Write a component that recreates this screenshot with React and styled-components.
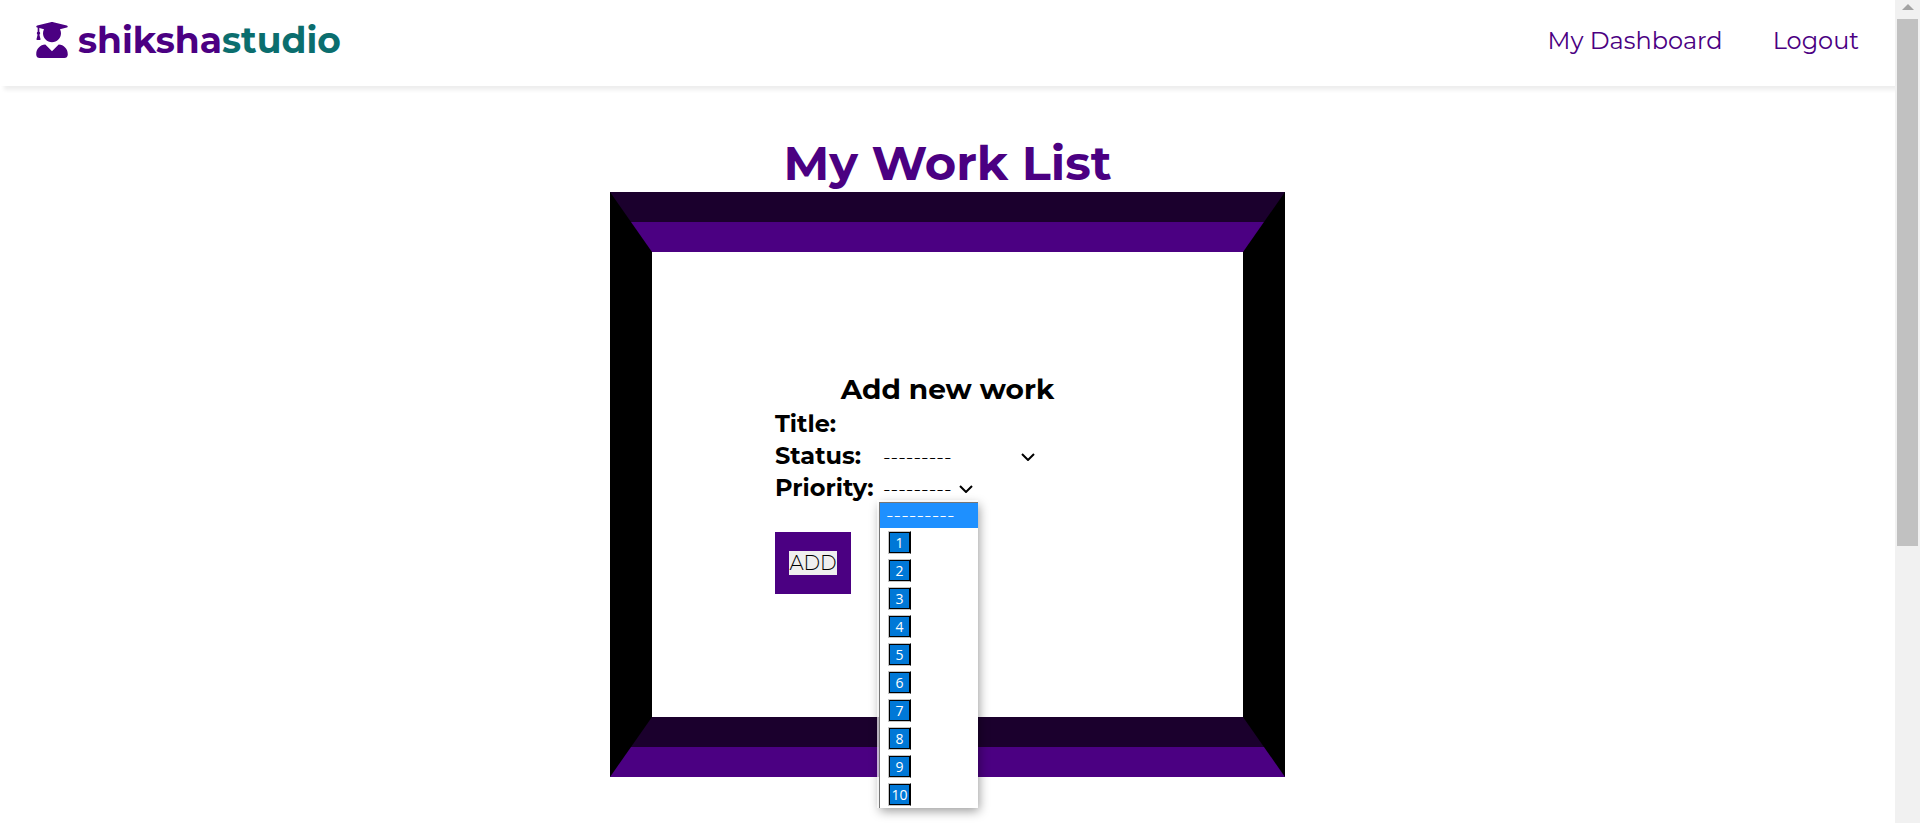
import React from "react";
import styled, { createGlobalStyle } from "styled-components";
import { FaUserGraduate } from "react-icons/fa";

const INDIGO = "#4b0082";
const INDIGO_DARK = "#1b002d";
const TEAL = "#0b6e6e";

const GlobalStyle = createGlobalStyle`
  *, *::before, *::after { box-sizing: border-box; }
  body {
    margin: 0;
    background: #fff;
    color: #000;
    font-family: Montserrat, Inter, sans-serif;
  }
  h1, h2, p, ul { margin: 0; padding: 0; }
`;

const Window = styled.div`
  display: grid;
  grid-template-columns: minmax(0, 1fr) 25px;
  height: 100vh;
  overflow: hidden;
`;

const Page = styled.div`
  min-width: 0;
`;

const ScrollTrack = styled.div`
  display: flex;
  flex-direction: column;
  align-items: center;
  background: #f1f1f1;
`;

const ScrollArrow = styled.svg`
  flex: none;
  width: 12px;
  height: 6px;
  margin: 4px 0 9px;
  fill: #a3a3a3;
`;

const ScrollThumb = styled.div`
  width: 21px;
  height: 64vh;
  background: #c1c1c1;
`;

const Header = styled.header`
  display: flex;
  justify-content: space-between;
  align-items: flex-start;
  height: 86px;
  padding: 17px 36px;
  box-shadow: 4px 4px 4px #eee;
`;

const Logo = styled.a`
  display: flex;
  align-items: center;
  gap: 10px;
  color: ${INDIGO};
  font-size: 36px;
  font-weight: 700;
  line-height: 46px;
  text-decoration: none;

  svg {
    width: 32px;
    height: 36px;
  }
`;

const LogoAccent = styled.span`
  color: ${TEAL};
`;

const Nav = styled.nav`
  display: flex;
  gap: 50px;
`;

const NavLink = styled.a`
  color: ${INDIGO};
  font-size: 24px;
  line-height: 48px;
  text-decoration: none;
`;

const Main = styled.main`
  display: flex;
  flex-direction: column;
  align-items: center;
  padding-top: 48px;
`;

const PageTitle = styled.h1`
  color: ${INDIGO};
  font-size: 48px;
  font-weight: 700;
  line-height: 58px;
`;

/* Two-tone bands along the top and bottom; FrameSides mitres them at the corners. */
const Frame = styled.section`
  width: 100%;
  max-width: 675px;
  background: linear-gradient(
    ${INDIGO_DARK} 30px,
    ${INDIGO} 30px 60px,
    #fff 60px calc(100% - 60px),
    ${INDIGO_DARK} calc(100% - 60px) calc(100% - 30px),
    ${INDIGO} calc(100% - 30px)
  );
`;

const FrameSides = styled.div`
  display: flex;
  justify-content: center;
  padding: 118px 0 123px;
  border: solid;
  border-width: 60px 42px;
  border-color: transparent #000;
`;

const Form = styled.form`
  width: 345px;
`;

const FormTitle = styled.h2`
  font-size: 28px;
  font-weight: 700;
  line-height: 38px;
  text-align: center;
`;

const Field = styled.div`
  display: flex;
  align-items: center;
  height: 32px;
`;

const Label = styled.label`
  flex: none;
  width: 105px;
  font-size: 24px;
  font-weight: 700;
  line-height: 30px;
`;

const TextInput = styled.input`
  flex: 1;
  min-width: 0;
  border: 0;
  outline: 0;
  background: transparent;
  font: inherit;
  font-size: 20px;
  font-weight: 300;
`;

const SelectBox = styled.div`
  position: relative;
  width: ${(p) => p.$width};
`;

const Select = styled.select`
  display: block;
  width: 100%;
  padding: 1px 3px 0;
  border: 0;
  outline: 0;
  appearance: none;
  background: transparent;
  color: #000;
  font: inherit;
  font-size: 20px;
  font-weight: 300;
  line-height: 24px;
`;

const Chevron = styled.svg`
  position: absolute;
  top: 9px;
  right: 5px;
  width: 14px;
  height: 8px;
  fill: none;
  stroke: #000;
  stroke-width: 2;
  pointer-events: none;
`;

const Menu = styled.ul`
  position: absolute;
  top: 26px;
  left: -1px;
  right: 0;
  z-index: 1;
  list-style: none;
  background: #fff;
  border-left: 1px solid #767676;
  box-shadow: -1px -1px 0 1px rgba(255, 255, 255, 0.7), 1px 3px 10px rgba(0, 0, 0, 0.4);
`;

const BlankOption = styled.li`
  height: 26px;
  padding: 0 6px;
  border-top: 1px solid #767676;
  background: #1e90ff;
  color: #fff;
  font-size: 20px;
  font-weight: 300;
  line-height: 24px;
`;

const Option = styled.li`
  display: flex;
  align-items: flex-start;
  height: 28px;
  padding: 3px 8px 2px;
`;

const Keycap = styled.span`
  width: 23px;
  height: 23px;
  border: 1px solid #c4c4c4;
  border-right-color: #000;
  box-shadow: inset 0 0 0 1px #000;
  background: #0078d7;
  color: #fff;
  font-family: "Segoe UI", "Open Sans", sans-serif;
  font-size: 14px;
  font-weight: 500;
  line-height: 21px;
  text-align: center;
`;

const Actions = styled.div`
  display: inline-flex;
  margin-top: 28px;
  padding: 19px 14px;
  background: ${INDIGO};
  vertical-align: top;
`;

const AddButton = styled.button`
  min-width: 48px;
  height: 24px;
  padding: 0;
  border: 0;
  background: #efefef;
  color: #000;
  font: inherit;
  font-size: 20px;
  font-weight: 300;
  line-height: 24px;
`;

const BLANK = "---------";
const PRIORITIES = [1, 2, 3, 4, 5, 6, 7, 8, 9, 10];

function ChevronIcon() {
  return (
    <Chevron viewBox="0 0 14 8" aria-hidden="true">
      <path d="M1 1l6 6 6-6" />
    </Chevron>
  );
}

export default function App() {
  return (
    <>
      <GlobalStyle />
      <Window>
        <Page>
          <Header>
            <Logo href="#home">
              <FaUserGraduate aria-hidden="true" />
              <span>
                shiksha<LogoAccent>studio</LogoAccent>
              </span>
            </Logo>
            <Nav>
              <NavLink href="#dashboard">My Dashboard</NavLink>
              <NavLink href="#logout">Logout</NavLink>
            </Nav>
          </Header>
          <Main>
            <PageTitle>My Work List</PageTitle>
            <Frame>
              <FrameSides>
                <Form onSubmit={(e) => e.preventDefault()}>
                  <FormTitle>Add new work</FormTitle>
                  <Field>
                    <Label htmlFor="title">Title:</Label>
                    <TextInput id="title" type="text" />
                  </Field>
                  <Field>
                    <Label htmlFor="status">Status:</Label>
                    <SelectBox $width="160px">
                      <Select id="status">
                        <option value="">{BLANK}</option>
                      </Select>
                      <ChevronIcon />
                    </SelectBox>
                  </Field>
                  <Field>
                    <Label htmlFor="priority">Priority:</Label>
                    <SelectBox $width="98px">
                      <Select id="priority">
                        <option value="">{BLANK}</option>
                      </Select>
                      <ChevronIcon />
                      <Menu role="listbox" aria-label="Priority">
                        <BlankOption role="option" aria-selected="true">
                          {BLANK}
                        </BlankOption>
                        {PRIORITIES.map((n) => (
                          <Option key={n} role="option" aria-selected="false">
                            <Keycap>{n}</Keycap>
                          </Option>
                        ))}
                      </Menu>
                    </SelectBox>
                  </Field>
                  <Actions>
                    <AddButton type="submit">ADD</AddButton>
                  </Actions>
                </Form>
              </FrameSides>
            </Frame>
          </Main>
        </Page>
        <ScrollTrack aria-hidden="true">
          <ScrollArrow viewBox="0 0 12 6">
            <path d="M0 6L6 0l6 6z" />
          </ScrollArrow>
          <ScrollThumb />
        </ScrollTrack>
      </Window>
    </>
  );
}
